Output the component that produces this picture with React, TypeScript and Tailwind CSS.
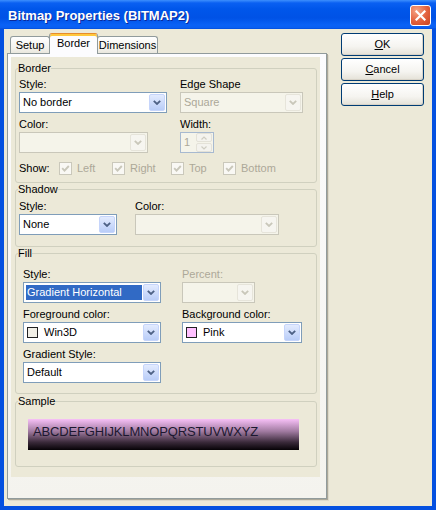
import React from "react";
import clsx from "clsx";

function Chevron({ color, up }: { color: string; up?: boolean }) {
  return (
    <svg width="8" height="5" viewBox="0 0 8 5" className="block">
      <path
        d={up ? "M0.8 4.2 L4 1 L7.2 4.2" : "M0.8 0.8 L4 4 L7.2 0.8"}
        fill="none"
        stroke={color}
        strokeWidth="1.8"
      />
    </svg>
  );
}

function DropButton({ disabled }: { disabled?: boolean }) {
  return (
    <div
      className={clsx(
        "m-px flex h-[17px] w-[16px] shrink-0 items-center justify-center rounded-[2px] border",
        disabled
          ? "border-[#e6e4da] bg-[#f6f5f0]"
          : "border-[#c6d5fb] bg-[linear-gradient(to_bottom,#e3ebfe,#b9cdf8)]"
      )}
    >
      <Chevron color={disabled ? "#c9c7ba" : "#4d6185"} />
    </div>
  );
}

type ComboProps = {
  w: string;
  value?: string;
  disabled?: boolean;
  highlighted?: boolean;
  swatch?: string;
};

function Combo({ w, value, disabled, highlighted, swatch }: ComboProps) {
  return (
    <div
      className={clsx(
        "mt-px flex h-[21px] border",
        w,
        disabled ? "border-[#c9c7ba] bg-[#f5f4ea] text-[#aca899]" : "border-[#7f9db9] bg-white"
      )}
    >
      <div className="flex min-w-0 flex-1 items-center pl-[2px]">
        {highlighted ? (
          <div className="flex h-[15px] flex-1 items-center bg-[#316ac5] pl-px text-white">{value}</div>
        ) : (
          <>
            {swatch && <span className={clsx("ml-px mr-[5px] h-[11px] w-[11px] border border-[#222]", swatch)} />}
            <span className="pl-px">{value}</span>
          </>
        )}
      </div>
      <DropButton disabled={disabled} />
    </div>
  );
}

function SpinButton({ up }: { up?: boolean }) {
  return (
    <div className="flex flex-1 items-center justify-center rounded-[2px] border border-[#e4e2d8] bg-[#f4f3ee]">
      <svg width="6" height="4" viewBox="0 0 6 4" className="block">
        <path d={up ? "M0.5 3.5 L3 1 L5.5 3.5" : "M0.5 0.5 L3 3 L5.5 0.5"} fill="none" stroke="#cfcdc2" strokeWidth="1.2" />
      </svg>
    </div>
  );
}

function Spinner() {
  return (
    <div className="mt-px flex h-[21px] w-[34px] border border-[#a7b9d0] bg-[#f5f4ea]">
      <span className="flex-1 pl-[3px] leading-[19px] text-[#aca899]">1</span>
      <div className="mr-px flex w-[16px] flex-col gap-px">
        <SpinButton up />
        <SpinButton />
      </div>
    </div>
  );
}

function Check({ label, w }: { label: string; w?: string }) {
  return (
    <div className={clsx("flex items-center", w)}>
      <span className="flex h-[13px] w-[13px] items-center justify-center border border-[#cac8bb] bg-[#f9f8f4]">
        <svg width="9" height="9" viewBox="0 0 9 9" className="block">
          <path d="M1.2 4.2 L3.5 6.6 L7.8 2" fill="none" stroke="#c9c7ba" strokeWidth="1.9" />
        </svg>
      </span>
      <span className="ml-[5px] text-[#aca899]">{label}</span>
    </div>
  );
}

function Group({ title, className, children }: { title: string; className?: string; children: React.ReactNode }) {
  return (
    <fieldset className={clsx("w-[302px] rounded-[3px] border border-[#d0d0bf]", className)}>
      <legend className="ml-[2px] leading-[13px]">{title}</legend>
      {children}
    </fieldset>
  );
}

function XpButton({ children }: { children: React.ReactNode }) {
  return (
    <div className="flex h-[23px] w-[83px] items-center justify-center rounded-[3px] border border-[#003c74] bg-[linear-gradient(to_bottom,#ffffff,#f5f4f0_60%,#e4e1d7)] shadow-[inset_-1px_-1px_0_#d8d3c8]">
      {children}
    </div>
  );
}

function Tab({ label, active, w }: { label: string; active?: boolean; w: string }) {
  if (active) {
    return (
      <div
        className={clsx(
          "relative z-10 -mb-px -ml-px h-[21px] rounded-t-[3px] border border-b-0 border-[#919b9c] border-t-[#e68b2c] bg-[#fcfcfe] pt-[2px] text-center shadow-[inset_0_2px_0_#ffc83c]",
          w
        )}
      >
        <span className="inline-block pt-px">{label}</span>
      </div>
    );
  }
  return (
    <div
      className={clsx(
        "-ml-px h-[17px] rounded-t-[3px] border border-b-0 border-[#919b9c] bg-[linear-gradient(to_bottom,#ffffff,#f3f2ec_70%,#e9e7de)] pt-px text-center",
        w
      )}
    >
      <span className="inline-block pt-px">{label}</span>
    </div>
  );
}

function TitleBar() {
  return (
    <div className="flex h-[29px] shrink-0 items-start justify-between bg-[linear-gradient(to_bottom,#3d8ffd_0px,#0a60f2_3px,#0056ea_9px,#0052e6_18px,#0a62f6_25px,#0a5ef0_28px,#0049d6_29px)]">
      <span className="pl-[8px] pt-[8px] text-[13px] leading-[15px] font-bold text-white [text-shadow:1px_1px_0_#0c2a9a]">
        Bitmap Properties (BITMAP2)
      </span>
      <div className="mr-[5px] mt-[5px] flex h-[21px] w-[21px] items-center justify-center rounded-[3px] border border-white bg-[radial-gradient(circle_at_30%_25%,#f5a486,#e2603d_55%,#c9431f)]">
        <svg width="11" height="11" viewBox="0 0 11 11" className="block">
          <path d="M1.5 1.5 L9.5 9.5 M9.5 1.5 L1.5 9.5" stroke="#ffffff" strokeWidth="2.2" strokeLinecap="square" />
        </svg>
      </div>
    </div>
  );
}

export default function App() {
  return (
    <div className="flex h-[510px] w-[436px] flex-col bg-[#0450e0] font-['Liberation_Sans',Arial,sans-serif] text-[11px] leading-[13px] text-black">
      <TitleBar />
      <div className="mx-[4px] mb-[4px] flex flex-1 bg-[#ece9d8] pl-[3px] pt-[4px]">
        <div className="w-[320px]">
          <div className="flex h-[20px] items-end pl-[4px]">
            <Tab label="Setup" w="w-[40px]" />
            <Tab label="Border" w="w-[49px]" active />
            <Tab label="Dimensions" w="w-[61px]" />
          </div>
          <div className="h-[446px] w-[320px] border border-[#919b9c] bg-[linear-gradient(to_bottom,#fcfcfe,#f4f3ee)] pl-[3px] pt-[3px] shadow-[1px_1px_0_#aca899,2px_2px_0_#dcd9cb]">
            <div className="h-[420px] w-[309px] bg-[#ece9d8] pl-[4px] pt-[5px]">
              <Group title="Border">
                <div className="pb-[7px] pl-[3px] pt-[3px]">
                  <div className="flex">
                    <div className="w-[161px]">
                      <div>Style:</div>
                      <Combo w="w-[148px]" value="No border" />
                    </div>
                    <div>
                      <div>Edge Shape</div>
                      <Combo w="w-[123px]" value="Square" disabled />
                    </div>
                  </div>
                  <div className="mt-[5px] flex">
                    <div className="w-[161px]">
                      <div>Color:</div>
                      <Combo w="w-[129px]" disabled />
                    </div>
                    <div>
                      <div>Width:</div>
                      <Spinner />
                    </div>
                  </div>
                  <div className="mt-[9px] flex h-[13px] items-center">
                    <span className="w-[40px]">Show:</span>
                    <Check label="Left" w="w-[53px]" />
                    <Check label="Right" w="w-[59px]" />
                    <Check label="Top" w="w-[52px]" />
                    <Check label="Bottom" />
                  </div>
                </div>
              </Group>

              <Group title="Shadow">
                <div className="flex pb-[11px] pl-[3px] pt-[4px]">
                  <div className="w-[116px]">
                    <div>Style:</div>
                    <Combo w="w-[98px]" value="None" />
                  </div>
                  <div>
                    <div>Color:</div>
                    <Combo w="w-[144px]" disabled />
                  </div>
                </div>
              </Group>

              <Group title="Fill">
                <div className="flex pb-[10px] pl-[7px] pt-[8px]">
                  <div className="w-[159px]">
                    <div>Style:</div>
                    <Combo w="w-[138px]" value="Gradient Horizontal" highlighted />
                    <div className="mt-[5px]">Foreground color:</div>
                    <Combo w="w-[138px]" value="Win3D" swatch="bg-[#f1efe6]" />
                    <div className="mt-[5px]">Gradient Style:</div>
                    <Combo w="w-[138px]" value="Default" />
                  </div>
                  <div>
                    <div className="text-[#aca899]">Percent:</div>
                    <Combo w="w-[73px]" disabled />
                    <div className="mt-[5px]">Background color:</div>
                    <Combo w="w-[120px]" value="Pink" swatch="bg-[#ffc0ff]" />
                  </div>
                </div>
              </Group>

              <Group title="Sample" className="mt-px">
                <div className="pb-[16px] pl-[12px] pt-[11px]">
                  <div className="h-[31px] w-[271px] bg-[linear-gradient(to_bottom,#f7c0f7,#a07aa0_40%,#3a2a3a_75%,#060206)] pl-[5px] pt-[5px] text-[13px] leading-[15px] tracking-[-0.15px] text-[#1c1830]">
                    ABCDEFGHIJKLMNOPQRSTUVWXYZ
                  </div>
                </div>
              </Group>
            </div>
          </div>
        </div>

        <div className="ml-[14px] flex flex-col gap-[2px]">
          <XpButton>
            <span>
              <span className="underline">O</span>K
            </span>
          </XpButton>
          <XpButton>
            <span>
              <span className="underline">C</span>ancel
            </span>
          </XpButton>
          <XpButton>
            <span>
              <span className="underline">H</span>elp
            </span>
          </XpButton>
        </div>
      </div>
    </div>
  );
}
